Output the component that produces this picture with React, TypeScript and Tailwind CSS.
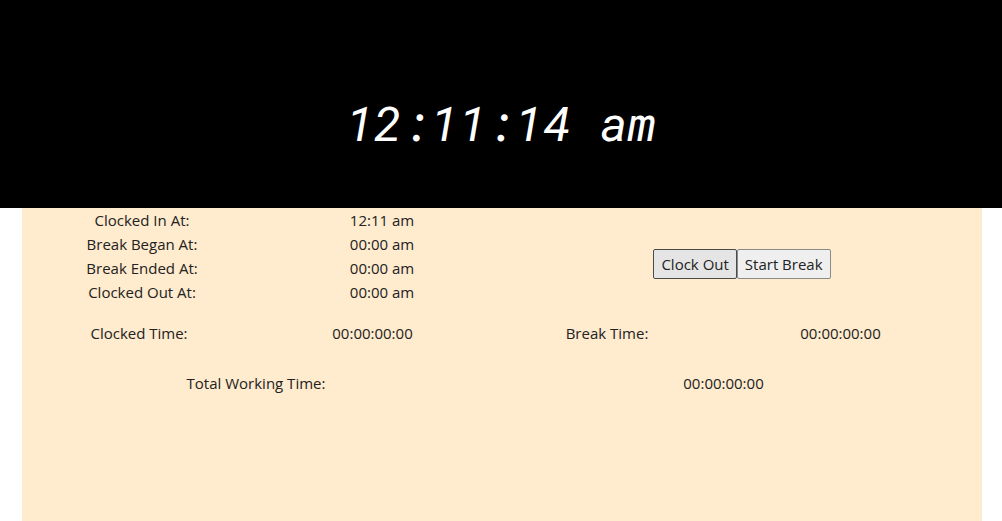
import React from "react";

const times = [
  { label: "Clocked In At:", value: "12:11 am" },
  { label: "Break Began At:", value: "00:00 am" },
  { label: "Break Ended At:", value: "00:00 am" },
  { label: "Clocked Out At:", value: "00:00 am" },
];

export default function App() {
  return (
    <div className="min-h-screen bg-white text-[16px] text-[#222]" style={{ fontFamily: '"Segoe UI", "Open Sans", sans-serif' }}>
      {/* Clock */}
      <header className="h-[208px] bg-black flex items-center justify-center pt-[37px]">
        <h1
          className="text-white text-[48px] italic leading-none"
          style={{ fontFamily: '"Roboto Mono", "DejaVu Sans Mono", monospace' }}
        >
          12:11:14 am
        </h1>
      </header>

      <main className="w-[960px] ml-[22px] bg-[#ffebcd] h-[313px] leading-[24px] text-[15px]">
        {/* Stamps + actions */}
        <div className="flex">
          <div className="w-[480px]">
            {times.map((t) => (
              <div key={t.label} className="flex">
                <span className="w-[240px] text-center">{t.label}</span>
                <span className="w-[240px] text-center">{t.value}</span>
              </div>
            ))}
          </div>
          <div className="w-[480px] flex justify-center items-start pt-[41px]">
            <button className="h-[30px] px-[7px] border border-[#4a4a4a] rounded-[2px] bg-[#e5e5e5] leading-none text-[15px]">
              Clock Out
            </button>
            <button className="h-[30px] px-[7px] border border-[#8a8a8a] rounded-[2px] bg-[#efefef] leading-none text-[15px]">
              Start Break
            </button>
          </div>
        </div>

        {/* Durations */}
        <div className="flex mt-[17px]">
          <span className="w-[234px] text-center">Clocked Time:</span>
          <span className="w-[233px] text-center">00:00:00:00</span>
          <span className="w-[236px] text-center">Break Time:</span>
          <span className="w-[231px] text-center">00:00:00:00</span>
        </div>

        <div className="flex mt-[26px]">
          <span className="w-[468px] text-center">Total Working Time:</span>
          <span className="w-[467px] text-center">00:00:00:00</span>
        </div>
      </main>
    </div>
  );
}
